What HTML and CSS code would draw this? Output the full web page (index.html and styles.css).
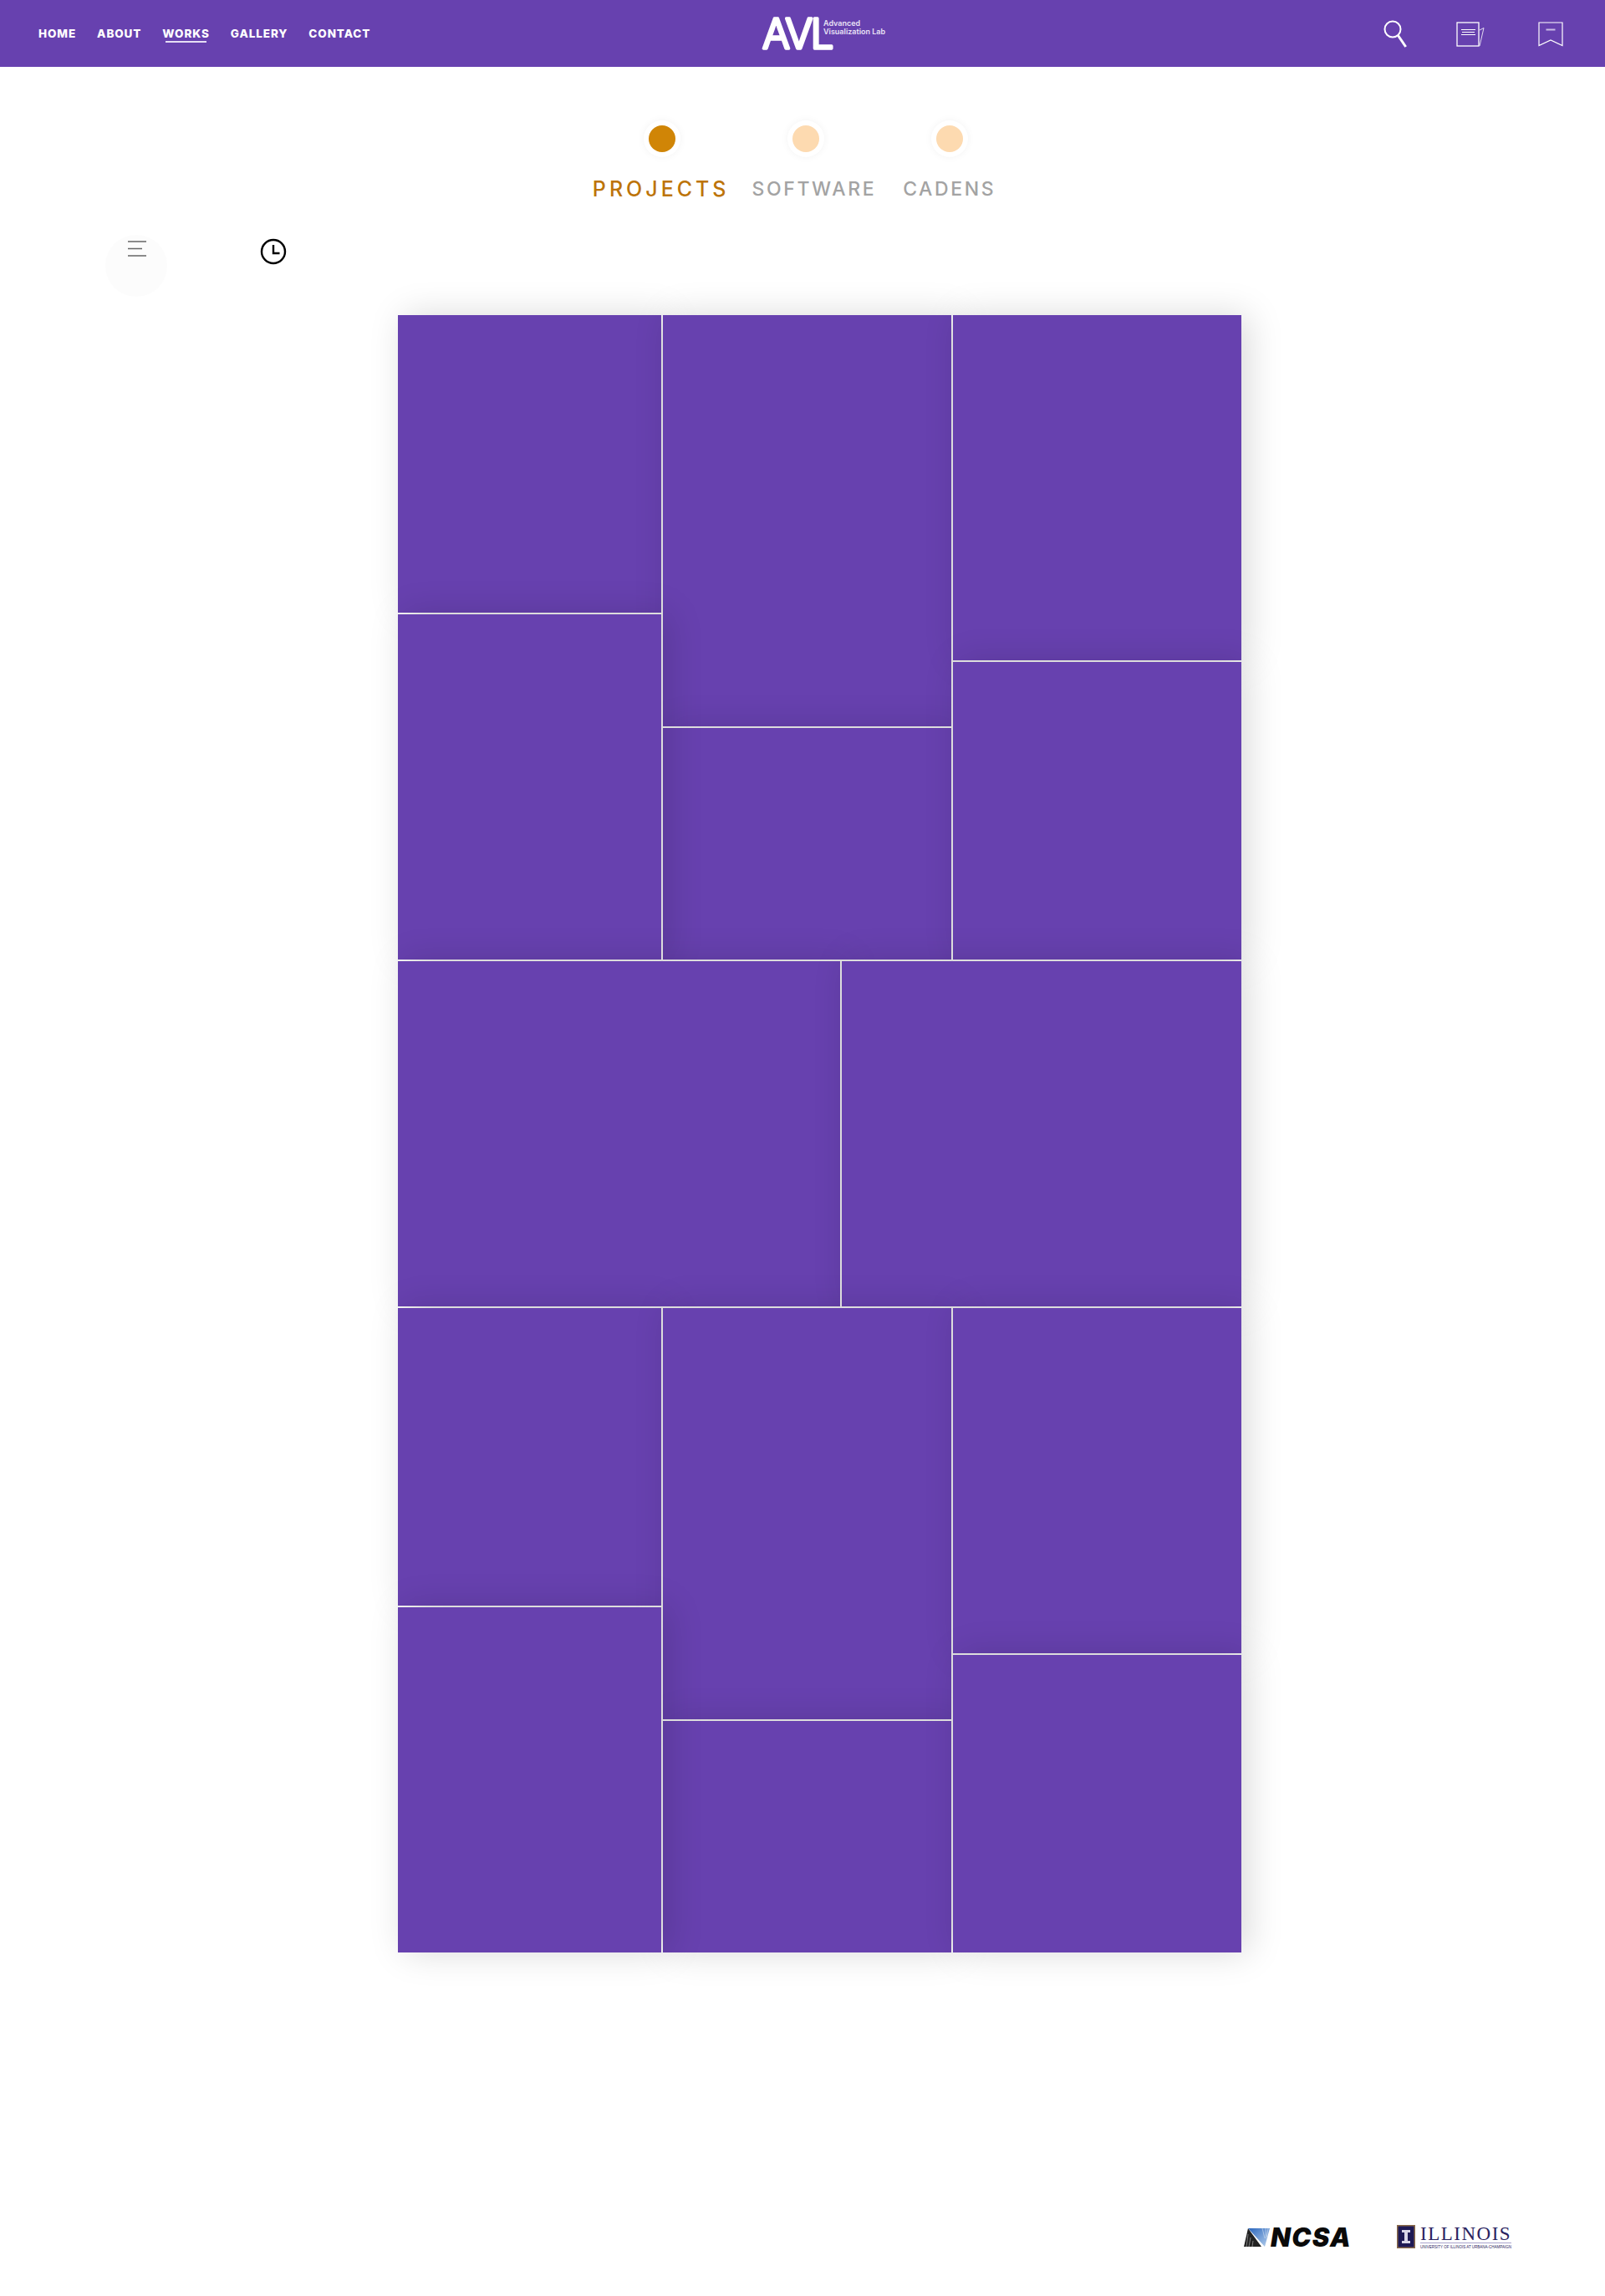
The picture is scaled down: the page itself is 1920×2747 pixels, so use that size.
FILE: index.html
```html
<!DOCTYPE html>
<html lang="en">
<head>
    <meta charset="UTF-8">
    <meta name="viewport" content="width=device-width, initial-scale=1.0">
    <title>Advanced Visualization Lab - Works</title>
    <link rel="stylesheet" href="styles.css">
</head>
<body>
    <header class="topbar">
        <nav class="nav">
            <a href="#">HOME</a>
            <a href="#">ABOUT</a>
            <a href="#" class="active">WORKS</a>
            <a href="#">GALLERY</a>
            <a href="#">CONTACT</a>
        </nav>
        <div class="brand">
            <svg class="brand-mark" width="96" height="44" viewBox="0 0 96 44">
                <text x="2" y="40" class="brand-letters">AVL</text>
            </svg>
            <div class="brand-text">Advanced<br>Visualization Lab</div>
        </div>
        <div class="tools">
            <svg class="tool-search" width="30" height="36" viewBox="0 0 30 36" fill="none" stroke="#fff">
                <circle cx="11" cy="11" r="9.5" stroke-width="2"/>
                <path d="M17.5 18.5 L26.7 32" stroke-width="3"/>
            </svg>
            <svg class="tool-note" width="36" height="30" viewBox="0 0 36 30" fill="none" stroke="#fff">
                <rect x="1" y="1" width="26" height="28" stroke-width="1.3"/>
                <path d="M6 9.5H23M7 12.5H22M6 15.5H23" stroke-width="1"/>
                <path d="M28 10 L33 7.5 L28 29" stroke-width="0.8"/>
            </svg>
            <svg class="tool-mark" width="30" height="30" viewBox="0 0 30 30" fill="none" stroke="#fff">
                <path d="M1 1H29V28.5L15 22L1 28.5Z" stroke-width="1.2"/>
                <path d="M9.5 9.5H20.5" stroke="#cbbce6" stroke-width="2"/>
            </svg>
        </div>
    </header>

    <section class="tabs">
        <div class="dots">
            <span class="dot on"></span>
            <span class="dot"></span>
            <span class="dot"></span>
        </div>
        <div class="labels">
            <span class="label on">PROJECTS</span>
            <span class="label">SOFTWARE</span>
            <span class="label">CADENS</span>
        </div>
    </section>

    <div class="view-bar">
        <span class="menu-btn">
            <svg width="22" height="20" viewBox="0 0 22 20" fill="none" stroke="#666" stroke-width="1.6">
                <path d="M0 1H22M0 9.5H17M0 18H22"/>
            </svg>
        </span>
        <svg class="clock" width="32" height="32" viewBox="0 0 32 32" fill="none" stroke="#000">
            <circle cx="16" cy="16" r="14" stroke-width="2.4"/>
            <path d="M16 8V18H23.5" stroke-width="2.4"/>
        </svg>
    </div>

    <main class="wall">
        <div class="block">
            <div class="col col-narrow">
                <div class="tile h356"></div>
                <div class="tile h413 raised"></div>
            </div>
            <div class="col">
                <div class="tile h492"></div>
                <div class="tile h277"></div>
            </div>
            <div class="col">
                <div class="tile h413"></div>
                <div class="tile h356"></div>
            </div>
        </div>
        <div class="block">
            <div class="tile h413 wide"></div>
            <div class="tile h413 wide-r"></div>
        </div>
        <div class="block">
            <div class="col col-narrow">
                <div class="tile h356"></div>
                <div class="tile h413 raised"></div>
            </div>
            <div class="col">
                <div class="tile h492"></div>
                <div class="tile h277"></div>
            </div>
            <div class="col">
                <div class="tile h413"></div>
                <div class="tile h356"></div>
            </div>
        </div>
    </main>

    <footer class="partners">
        <div class="ncsa">
            <svg width="32" height="22" viewBox="0 0 32 22">
                <defs>
                    <linearGradient id="ncsaBlue" x1="0" y1="0" x2="1" y2="1">
                        <stop offset="0" stop-color="#2a66bd"/>
                        <stop offset="1" stop-color="#b9d2ee"/>
                    </linearGradient>
                </defs>
                <path d="M5 0L0 22H21Z" fill="#222"/>
                <path d="M5 0H31L25 22Z" fill="url(#ncsaBlue)"/>
                <path d="M5 7L3 22M8 11L6 22M11 15L10 22M22 0L25 12M26 0L26.5 12M29 0L27.5 10" stroke="#fff" stroke-width="0.7" opacity="0.6"/>
            </svg>
            <span class="ncsa-name">NCSA</span>
        </div>
        <div class="illinois">
            <svg width="22" height="28" viewBox="0 0 22 28">
                <rect width="22" height="28" fill="#8a6a4a"/>
                <rect x="1.5" y="1.5" width="19" height="25" fill="#1f1a55"/>
                <path d="M6 6H16V9H13V19H16V22H6V19H9V9H6Z" fill="#d9d6e8"/>
            </svg>
            <div class="illinois-text">
                <div class="illinois-name">ILLINOIS</div>
                <div class="illinois-sub">UNIVERSITY OF ILLINOIS AT URBANA-CHAMPAIGN</div>
            </div>
        </div>
    </footer>
</body>
</html>
```

FILE: styles.css
```css
* {
    box-sizing: border-box;
}
body {
    margin: 0;
    height: 2747px;
    overflow: hidden;
    background-color: #fff;
    font-family: Inter, "Open Sans", sans-serif;
}
.topbar {
    height: 80px;
    background-color: #6741af;
    display: grid;
    grid-template-columns: 1fr auto 1fr;
    align-items: center;
    padding-left: 46px;
}
.nav {
    display: flex;
    gap: 25px;
}
.nav a {
    position: relative;
    color: #fff;
    text-decoration: none;
    font-size: 13.5px;
    font-weight: 800;
    letter-spacing: 0.9px;
    line-height: 18px;
}
.nav a.active::after {
    content: "";
    position: absolute;
    left: 4px;
    right: 4px;
    bottom: -2px;
    height: 2px;
    background-color: #e6def5;
}
.brand {
    display: flex;
    align-items: flex-start;
    width: 146px;
}
.brand-mark {
    flex: none;
    overflow: visible;
}
.brand-letters {
    font-family: Inter, sans-serif;
    font-size: 49px;
    font-weight: 300;
    fill: #fff;
    stroke: #fff;
    stroke-width: 3.4;
    stroke-linejoin: round;
    letter-spacing: -2.5px;
}
.brand-text {
    margin-left: -21px;
    margin-top: 5px;
    color: #e9e2f6;
    font-size: 9px;
    font-weight: 600;
    line-height: 10px;
    white-space: nowrap;
}
.tools {
    display: flex;
    justify-content: flex-end;
    align-items: flex-start;
    align-self: start;
    padding: 24px 50px 0 0;
}
.tool-search {
    margin-right: 57px;
}
.tool-note {
    margin-right: 62px;
    margin-top: 2px;
}
.tool-mark {
    margin-top: 2px;
}
.tabs {
    padding-top: 70px;
}
.dots {
    display: flex;
    justify-content: center;
    gap: 140px;
    padding-left: 8px;
}
.dot {
    width: 32px;
    height: 32px;
    border-radius: 50%;
    background-color: #fddab0;
    box-shadow: 0 0 0 6px #fff, 0 0 10px 6px rgba(0, 0, 0, 0.05);
}
.dot.on {
    background-color: #d08506;
}
.labels {
    display: flex;
    justify-content: center;
    gap: 32px;
    margin-top: 29px;
    padding-right: 20px;
}
.label {
    color: #a3a3a3;
    font-size: 23px;
    font-weight: 500;
    letter-spacing: 2.6px;
    line-height: 30px;
}
.label.on {
    color: #bd7408;
    font-size: 25px;
    letter-spacing: 4px;
    margin-right: -5px;
}
.view-bar {
    display: flex;
    align-items: flex-start;
    padding: 47px 0 0 153px;
    height: 136px;
}
.menu-btn {
    display: block;
    position: relative;
    width: 22px;
    height: 20px;
    margin-right: 136px;
}
.menu-btn::before {
    content: "";
    position: absolute;
    left: -27px;
    top: -7px;
    width: 74px;
    height: 74px;
    border-radius: 50%;
    background-color: #fcfcfc;
}
.menu-btn svg {
    position: relative;
    display: block;
}
.clock {
    margin-top: -3px;
}
.wall {
    width: 1009px;
    margin-left: 476px;
    display: flex;
    flex-direction: column;
    gap: 2px;
}
/* each block is its own stacking context so its shadows fall on the block above only */
.block {
    position: relative;
    z-index: 0;
    display: flex;
    gap: 2px;
}
.col {
    width: 345px;
    display: flex;
    flex-direction: column;
    gap: 2px;
}
.col-narrow {
    width: 315px;
}
.tile {
    background-color: #6741af;
    box-shadow: 8px 0 40px rgba(0, 0, 0, 0.15);
}
.raised {
    position: relative;
}
.h277 { height: 277px; }
.h356 { height: 356px; }
.h413 { height: 413px; }
.h492 { height: 492px; }
.wide { width: 529px; }
.wide-r { width: 478px; }
.partners {
    display: flex;
    align-items: center;
    padding: 326px 0 0 1488px;
}
.ncsa {
    display: flex;
    align-items: center;
    gap: 0;
    margin-right: 54px;
}
.ncsa svg {
    display: block;
}
.ncsa-name {
    font-size: 31px;
    font-weight: 900;
    font-style: italic;
    line-height: 22px;
    color: #0a0a0a;
    letter-spacing: 1.4px;
}
.illinois {
    display: flex;
    gap: 6px;
}
.illinois svg {
    display: block;
}
.illinois-text {
    width: 109px;
}
.illinois-name {
    font-family: "Liberation Serif", serif;
    font-size: 23px;
    line-height: 21px;
    letter-spacing: 1.5px;
    color: #2a2360;
    border-bottom: 1.5px solid #a9a4cc;
    white-space: nowrap;
}
.illinois-sub {
    margin-top: 2px;
    font-family: "Liberation Sans", sans-serif;
    font-size: 4.5px;
    line-height: 6px;
    color: #2a2360;
    white-space: nowrap;
}
```
